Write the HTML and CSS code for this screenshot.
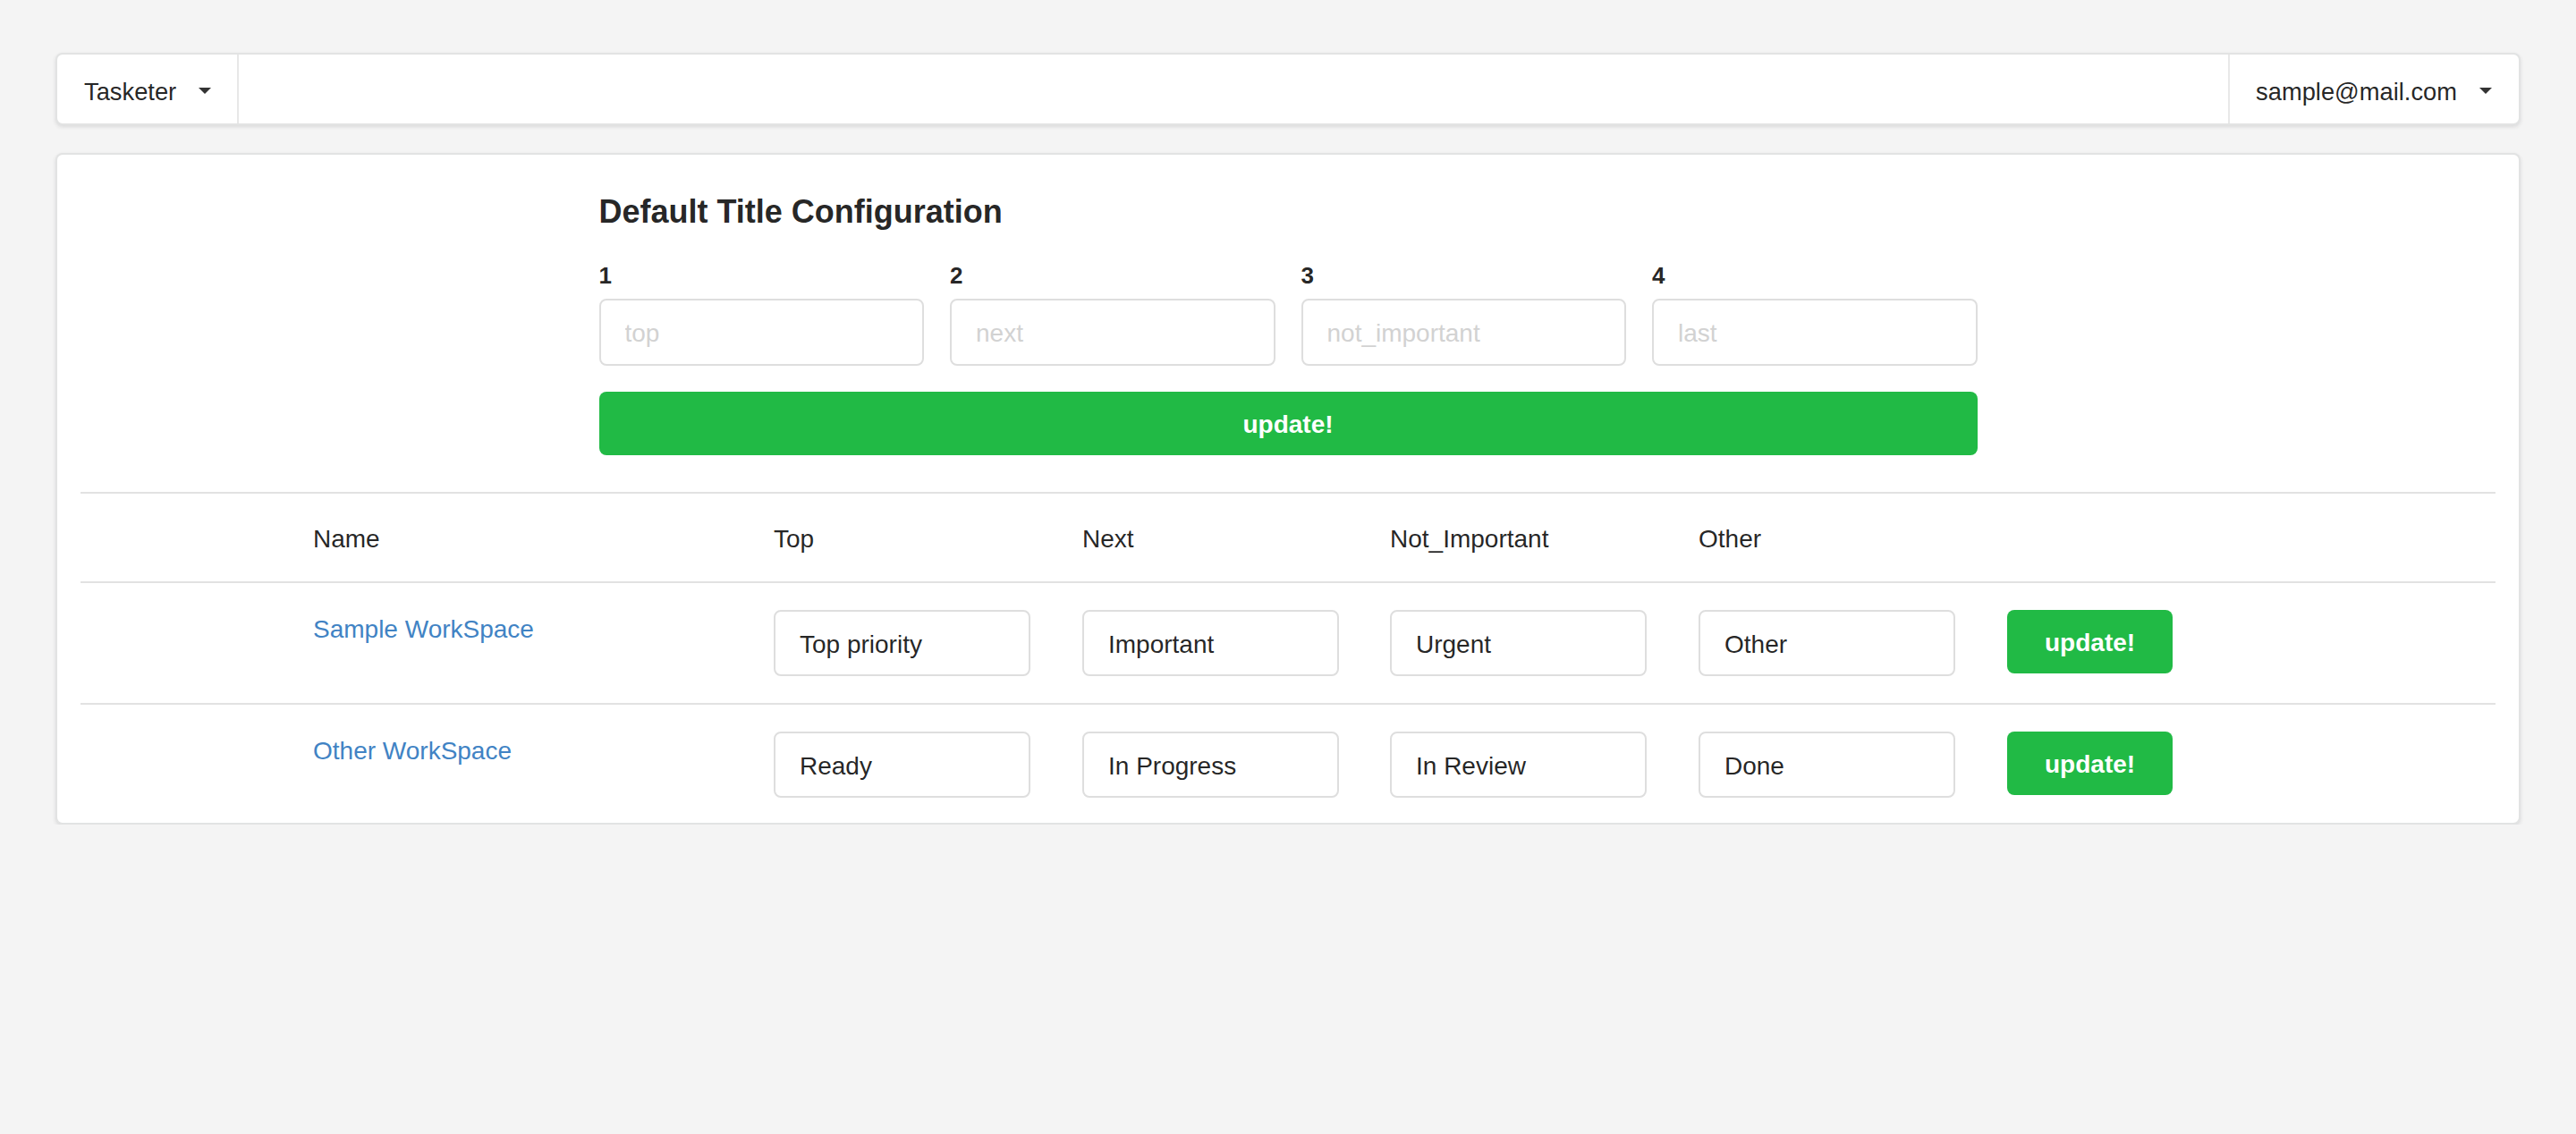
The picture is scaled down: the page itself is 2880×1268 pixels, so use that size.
FILE: index.html
```html
<!DOCTYPE html>
<html lang="en">
<head>
<meta charset="utf-8">
<title>Tasketer</title>
<link rel="stylesheet" href="styles.css">
</head>
<body>
<div class="page">
  <nav class="navbar">
    <div class="nav-item nav-brand"><span class="nav-label">Tasketer</span><span class="caret"></span></div>
    <div class="nav-spacer"></div>
    <div class="nav-item nav-user"><span class="nav-label">sample@mail.com</span><span class="caret"></span></div>
  </nav>

  <main class="card">
    <section class="config">
      <h3 class="config-title">Default Title Configuration</h3>
      <div class="config-fields">
        <div class="field"><label class="field-label">1</label><input class="input" placeholder="top"></div>
        <div class="field"><label class="field-label">2</label><input class="input" placeholder="next"></div>
        <div class="field"><label class="field-label">3</label><input class="input" placeholder="not_important"></div>
        <div class="field"><label class="field-label">4</label><input class="input" placeholder="last"></div>
      </div>
      <button class="btn btn-block">update!</button>
    </section>

    <div class="ws-table">
      <div class="ws-row ws-head">
        <div></div>
        <div>Name</div>
        <div>Top</div>
        <div>Next</div>
        <div>Not_Important</div>
        <div>Other</div>
        <div></div>
      </div>
      <div class="ws-row ws-body">
        <div></div>
        <div class="ws-name"><a href="#" class="link">Sample WorkSpace</a></div>
        <div><input class="input cell-input" value="Top priority"></div>
        <div><input class="input cell-input" value="Important"></div>
        <div><input class="input cell-input" value="Urgent"></div>
        <div><input class="input cell-input" value="Other"></div>
        <div><button class="btn">update!</button></div>
      </div>
      <div class="ws-row ws-body">
        <div></div>
        <div class="ws-name"><a href="#" class="link">Other WorkSpace</a></div>
        <div><input class="input cell-input" value="Ready"></div>
        <div><input class="input cell-input" value="In Progress"></div>
        <div><input class="input cell-input" value="In Review"></div>
        <div><input class="input cell-input" value="Done"></div>
        <div><button class="btn">update!</button></div>
      </div>
    </div>
  </main>
</div>
</body>
</html>
```

FILE: styles.css
```css
* {
  box-sizing: border-box;
}

html, body {
  margin: 0;
  padding: 0;
  background: #f4f4f4;
}

body {
  font-family: "Liberation Sans", Arial, Helvetica, sans-serif;
  color: rgba(0, 0, 0, 0.87);
  font-size: 28px;
}

.page {
  padding: 59px 62px 0;
}

/* ---------- navbar ---------- */
.navbar {
  display: flex;
  align-items: stretch;
  height: 81px;
  background: #fff;
  border: 2px solid rgba(34, 36, 38, 0.13);
  border-radius: 8px;
  box-shadow: 0 2px 4px 0 rgba(34, 36, 38, 0.12);
  margin-bottom: 31px;
}

.nav-item {
  display: flex;
  align-items: center;
  font-size: 27.3px;
  color: rgba(0, 0, 0, 0.87);
  padding: 0 29px 0 30px;
}

.nav-label {
  padding-top: 6px;
}

.nav-brand {
  border-right: 2px solid #e8e8e8;
}

.nav-user {
  border-left: 2px solid #e8e8e8;
  padding: 0 30px 0 29px;
}

.nav-spacer {
  flex: 1;
}

.caret {
  display: inline-block;
  width: 0;
  height: 0;
  border-left: 7px solid transparent;
  border-right: 7px solid transparent;
  border-top: 7px solid #333;
  margin-left: 25px;
  margin-top: 3px;
}

/* ---------- card ---------- */
.card {
  display: block;
  background: #fff;
  border: 2px solid rgba(34, 36, 38, 0.13);
  border-radius: 8px;
  box-shadow: 0 2px 4px 0 rgba(34, 36, 38, 0.12);
  padding: 41px 26px 0;
}

.config {
  width: 1541px;
  margin: 0 auto 41px;
}

.config-title {
  margin: 0 0 30px;
  font-size: 36px;
  line-height: 46px;
  font-weight: 700;
  color: rgba(0, 0, 0, 0.87);
}

.config-fields {
  display: grid;
  grid-template-columns: repeat(4, 1fr);
  column-gap: 29px;
}

.field-label {
  display: block;
  font-size: 26px;
  font-weight: 700;
  line-height: 32px;
  padding-top: 2px;
  margin-bottom: 10px;
  color: rgba(0, 0, 0, 0.87);
}

.input {
  display: block;
  width: 100%;
  height: 75px;
  padding: 3px 27px 0;
  font-family: inherit;
  font-size: 28px;
  color: rgba(0, 0, 0, 0.87);
  background: #fff;
  border: 2px solid #dedede;
  border-radius: 8px;
  outline: none;
}

.input::placeholder {
  color: #d2d2d2;
}

.btn {
  display: inline-flex;
  align-items: center;
  justify-content: center;
  height: 71px;
  padding: 3px 42px 0;
  background: #21ba45;
  color: #fff;
  font-family: inherit;
  font-size: 28px;
  font-weight: 700;
  border: none;
  border-radius: 8px;
  cursor: pointer;
}

.btn-block {
  display: flex;
  width: 100%;
  margin-top: 29px;
}

/* ---------- table ---------- */
.ws-row {
  display: grid;
  grid-template-columns: 260px 515px 345px 344px 345px 345px 1fr;
  border-top: 2px solid #e2e2e2;
}

.ws-head {
  height: 100px;
  padding-top: 4px;
  align-items: center;
  color: rgba(0, 0, 0, 0.87);
}

.ws-body {
  align-items: start;
  padding: 30px 0;
}

.ws-body:last-child {
  padding-bottom: 28px;
}

.ws-name {
  padding-top: 5px;
  line-height: 34px;
}

.link {
  color: #4183c4;
  text-decoration: none;
}

.cell-input {
  width: 287px;
  height: 74px;
}
```
